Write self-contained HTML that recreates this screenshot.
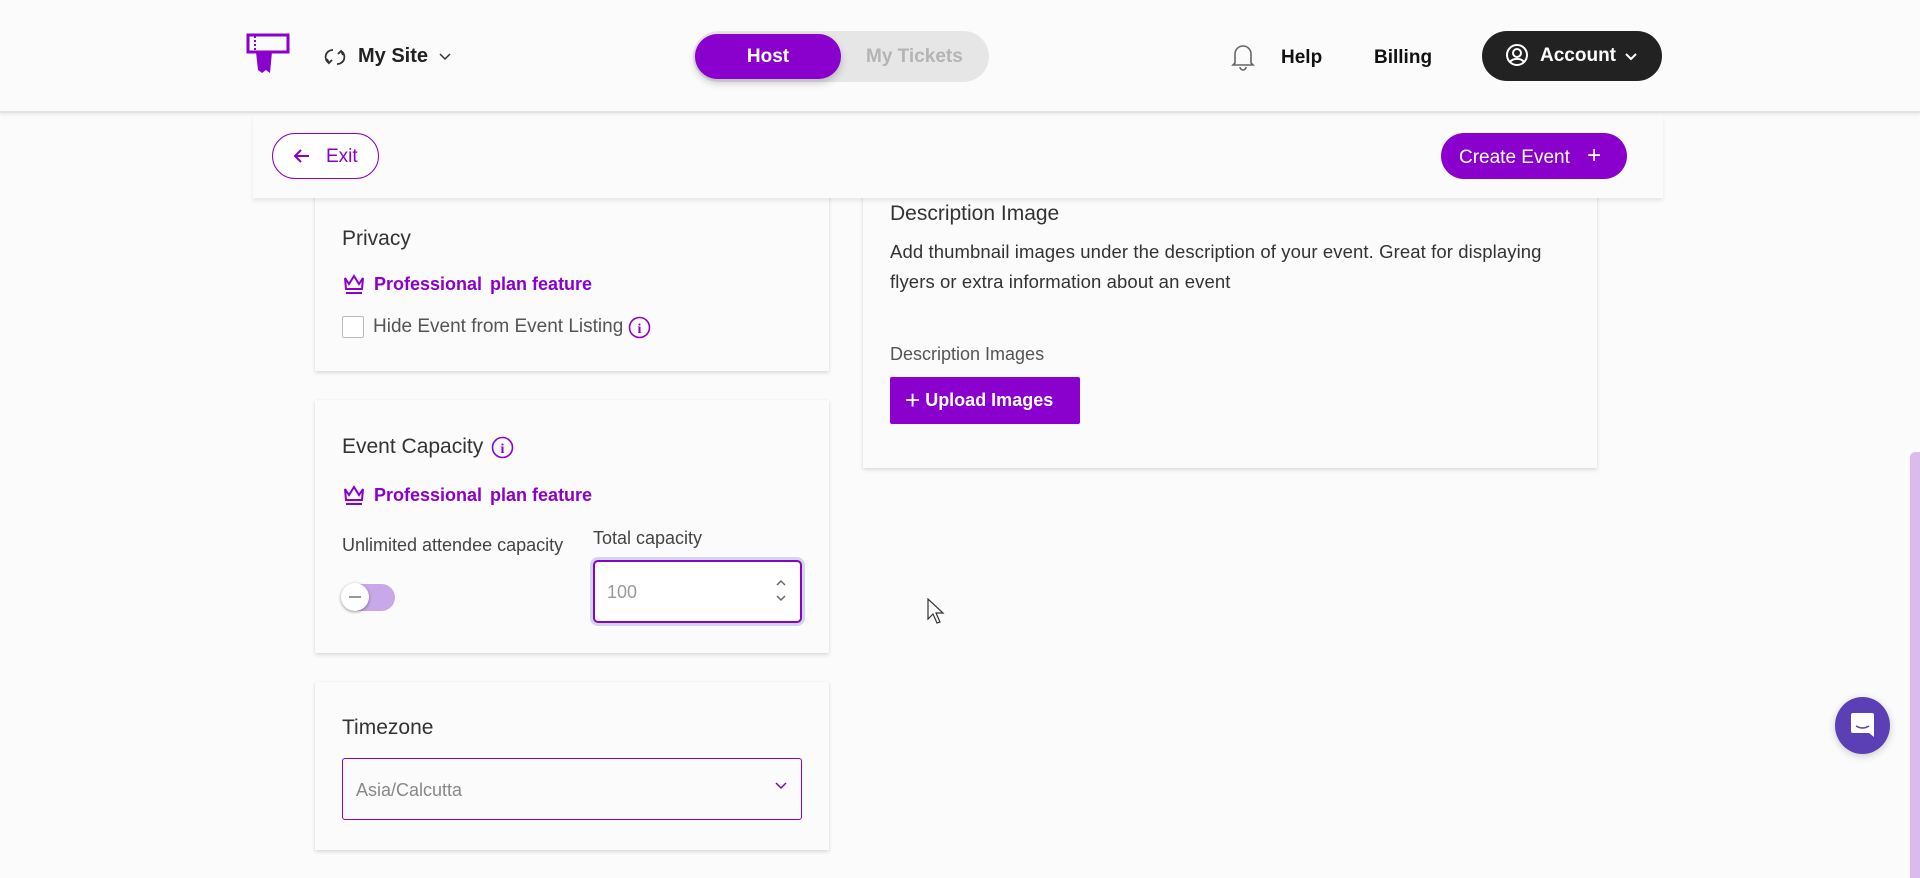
<!DOCTYPE html>
<html><head><meta charset="utf-8">
<style>
*{box-sizing:border-box;margin:0;padding:0}
body{width:1920px;height:878px;overflow:hidden;background:#fbfbfb;font-family:"Liberation Sans",sans-serif;color:#222;position:relative}
.abs{position:absolute}
.hdr{left:0;top:0;width:1920px;height:113px;background:#fbfbfb;border-bottom:2px solid #e2e2e2;box-shadow:0 2px 3px rgba(0,0,0,.06)}
.card{background:#fbfbfb;box-shadow:0 2px 4px rgba(0,0,0,.12),0 0 2px rgba(0,0,0,.06)}
.purple{color:#8a00cc}
.t22{font-size:21px;color:#333}
.pro{font-size:18px;font-weight:bold;color:#8a00cc;display:flex;align-items:center;gap:8px}
</style></head><body>
<div class="abs hdr"></div>
<svg class="abs" style="left:246px;top:33px" width="46" height="42" viewBox="0 0 46 42">
<rect x="2" y="2" width="40" height="17" fill="none" stroke="#8a00cc" stroke-width="3"/>
<line x1="9" y1="3" x2="9" y2="18" stroke="#8a00cc" stroke-width="2" stroke-dasharray="2 2"/>
<path d="M10 19 L26 19 L24 40 L20 37 L16 40 L12 37 Z" fill="#8a00cc"/>
</svg>
<svg class="abs" style="left:324px;top:46px" width="22" height="22" viewBox="0 0 22 22" fill="none" stroke="#333" stroke-width="1.8"><path d="M5 17 A7 7 0 0 1 9 4 M17 5 A7 7 0 0 1 13 18"/><path d="M3 13 L5 17 L8 14 M19 9 L17 5 L14 8"/></svg>
<div class="abs" style="left:358px;top:45px;font-size:20px;font-weight:bold;color:#222">My Site</div>
<svg class="abs" style="left:439px;top:53px" width="12" height="8" viewBox="0 0 12 8"><path d="M1 1 L6 6 L11 1" fill="none" stroke="#333" stroke-width="1.5"/></svg>
<div class="abs" style="left:693px;top:31px;width:296px;height:51px;border-radius:26px;background:#e6e6e6"></div>
<div class="abs" style="left:695px;top:34px;width:146px;height:45px;border-radius:23px;background:#8a00cc;box-shadow:0 4px 8px rgba(0,0,0,.2);color:#fff;font-weight:bold;font-size:19px;text-align:center;line-height:45px">Host</div>
<div class="abs" style="left:866px;top:46px;font-size:19px;font-weight:bold;color:#b4b4b4">My Tickets</div>
<svg class="abs" style="left:1231px;top:43px" width="24" height="28" viewBox="0 0 24 28" fill="none" stroke="#666" stroke-width="1.6"><path d="M4 20 L4 11 A8 8 0 0 1 20 11 L20 20 L22 22 L2 22 Z"/><path d="M9 24 A3 3 0 0 0 15 24"/></svg>
<div class="abs" style="left:1281px;top:47px;font-size:19px;font-weight:bold;color:#111">Help</div>
<div class="abs" style="left:1374px;top:47px;font-size:19px;font-weight:bold;color:#111">Billing</div>
<div class="abs" style="left:1482px;top:31px;width:180px;height:50px;border-radius:25px;background:#222"></div>
<svg class="abs" style="left:1505px;top:43px" width="24" height="24" viewBox="0 0 24 24" fill="none" stroke="#fff" stroke-width="2"><circle cx="12" cy="12" r="10"/><circle cx="12" cy="10" r="4"/><path d="M5 19 A8 6 0 0 1 19 19"/></svg>
<div class="abs" style="left:1540px;top:45px;font-size:19px;font-weight:bold;color:#fff">Account</div>
<svg class="abs" style="left:1625px;top:53px" width="12" height="8" viewBox="0 0 12 8"><path d="M1 1 L6 6 L11 1" fill="none" stroke="#fff" stroke-width="2"/></svg>

<div class="abs card" style="left:315px;top:185px;width:514px;height:186px"></div>
<div class="abs card" style="left:315px;top:400px;width:514px;height:253px"></div>
<div class="abs card" style="left:315px;top:682px;width:514px;height:168px"></div>
<div class="abs card" style="left:863px;top:185px;width:734px;height:283px"></div>

<div class="abs" style="left:253px;top:116px;width:1410px;height:82px;background:#fbfbfb;box-shadow:0 3px 4px rgba(0,0,0,.08)"></div>
<div class="abs" style="left:272px;top:133px;width:107px;height:46px;border:1.5px solid #8a00cc;border-radius:23px;background:#fff"></div>
<svg class="abs" style="left:293px;top:147px" width="18" height="18" viewBox="0 0 18 18" fill="none" stroke="#8a00cc" stroke-width="2"><path d="M16 9 H2 M8 3 L2 9 L8 15"/></svg>
<div class="abs purple" style="left:326px;top:146px;font-size:19px">Exit</div>
<div class="abs" style="left:1441px;top:133px;width:186px;height:46px;border-radius:23px;background:#8a00cc;color:#fff;font-size:19px;line-height:46px;padding-left:18px">Create Event <span style="margin-left:12px;font-size:24px;font-weight:300">+</span></div>

<div class="abs t22" style="left:342px;top:227px">Privacy</div>
<div class="abs pro" style="left:342px;top:272px"><svg width="24" height="24" viewBox="0 0 24 24" fill="none" stroke="#8a00cc" stroke-width="2"><path d="M3 6 L7 12 L12 4 L17 12 L21 6 L20 17 H4 Z"/><path d="M4 21 H20"/></svg>Professional <span>plan feature</span></div>
<div class="abs" style="left:342px;top:316px;width:22px;height:22px;border:1.5px solid #bbb;border-radius:2px;background:#fff"></div>
<div class="abs" style="left:373px;top:316px;font-size:19px;color:#555">Hide Event from Event Listing</div>
<svg class="abs" style="left:628px;top:316px" width="23" height="23" viewBox="0 0 23 23"><circle cx="11.5" cy="11.5" r="10" fill="none" stroke="#8a00cc" stroke-width="1.6"/><text x="11.5" y="17" font-family="Liberation Serif" font-weight="bold" font-size="14" fill="#8a00cc" text-anchor="middle">i</text></svg>

<div class="abs t22" style="left:342px;top:435px">Event Capacity</div>
<svg class="abs" style="left:491px;top:436px" width="23" height="23" viewBox="0 0 23 23"><circle cx="11.5" cy="11.5" r="10" fill="none" stroke="#8a00cc" stroke-width="1.6"/><text x="11.5" y="17" font-family="Liberation Serif" font-weight="bold" font-size="14" fill="#8a00cc" text-anchor="middle">i</text></svg>
<div class="abs pro" style="left:342px;top:483px"><svg width="24" height="24" viewBox="0 0 24 24" fill="none" stroke="#8a00cc" stroke-width="2"><path d="M3 6 L7 12 L12 4 L17 12 L21 6 L20 17 H4 Z"/><path d="M4 21 H20"/></svg>Professional <span>plan feature</span></div>
<div class="abs" style="left:342px;top:535px;font-size:18px;color:#444">Unlimited attendee capacity</div>
<div class="abs" style="left:593px;top:528px;font-size:18px;color:#444">Total capacity</div>
<div class="abs" style="left:342px;top:584px;width:53px;height:27px;border-radius:14px;background:#c8a8e8"></div>
<div class="abs" style="left:341px;top:583px;width:28px;height:28px;border-radius:50%;background:#fff;box-shadow:0 1px 3px rgba(0,0,0,.4)"></div>
<div class="abs" style="left:349px;top:596px;width:12px;height:2px;background:#999"></div>
<div class="abs" style="left:593px;top:560px;width:209px;height:63px;border:2px solid #8a00cc;border-radius:5px;background:#fff;box-shadow:0 0 0 3px #cfd6ee"></div>
<div class="abs" style="left:607px;top:582px;font-size:18px;color:#999">100</div>
<svg class="abs" style="left:775px;top:578px" width="12" height="26" viewBox="0 0 12 26" fill="none" stroke="#666" stroke-width="1.5"><path d="M2 7 L6 3 L10 7 M2 18 L6 22 L10 18"/></svg>

<div class="abs t22" style="left:342px;top:716px">Timezone</div>
<div class="abs" style="left:342px;top:758px;width:460px;height:62px;border:1.5px solid #8a00cc;border-radius:3px;background:#fbfbfb"></div>
<div class="abs" style="left:356px;top:780px;font-size:18px;color:#888">Asia/Calcutta</div>
<svg class="abs" style="left:775px;top:782px" width="12" height="8" viewBox="0 0 12 8"><path d="M1 1 L6 6 L11 1" fill="none" stroke="#8a00cc" stroke-width="1.5"/></svg>

<div class="abs t22" style="left:890px;top:202px">Description Image</div>
<div class="abs" style="left:890px;top:237px;font-size:18.5px;line-height:30px;color:#333;width:720px;letter-spacing:0.1px">Add thumbnail images under the description of your event. Great for displaying<br>flyers or extra information about an event</div>
<div class="abs" style="left:890px;top:344px;font-size:18px;color:#555">Description Images</div>
<div class="abs" style="left:890px;top:377px;width:190px;height:47px;border-radius:2px;background:#8a00cc;color:#fff;font-weight:bold;font-size:18px;line-height:47px;padding-left:15px"><span style="font-weight:300;font-size:26px;vertical-align:-3px">+</span> Upload Images</div>

<svg class="abs" style="left:927px;top:598px" width="18" height="28" viewBox="0 0 18 28"><path d="M1 1 L1 21 L6 16 L10 25 L13 24 L9 15 L16 15 Z" fill="#fff" stroke="#333" stroke-width="1.2"/></svg>

<div class="abs" style="left:1910px;top:452px;width:10px;height:426px;border-radius:5px 0 0 0;background:#dbbbee"></div>
<div class="abs" style="left:1835px;top:697px;width:55px;height:57px;border-radius:50%;background:#5b3fb5;box-shadow:0 2px 8px rgba(0,0,0,.2)"></div>
<svg class="abs" style="left:1849px;top:711px" width="27" height="29" viewBox="0 0 27 29"><path d="M4 2 H23 A2 2 0 0 1 25 4 V26 L20 22 H4 A2 2 0 0 1 2 20 V4 A2 2 0 0 1 4 2 Z" fill="#fff"/><path d="M7 15 Q13.5 19 20 15" fill="none" stroke="#5b3fb5" stroke-width="1.6"/></svg>
</body></html>
